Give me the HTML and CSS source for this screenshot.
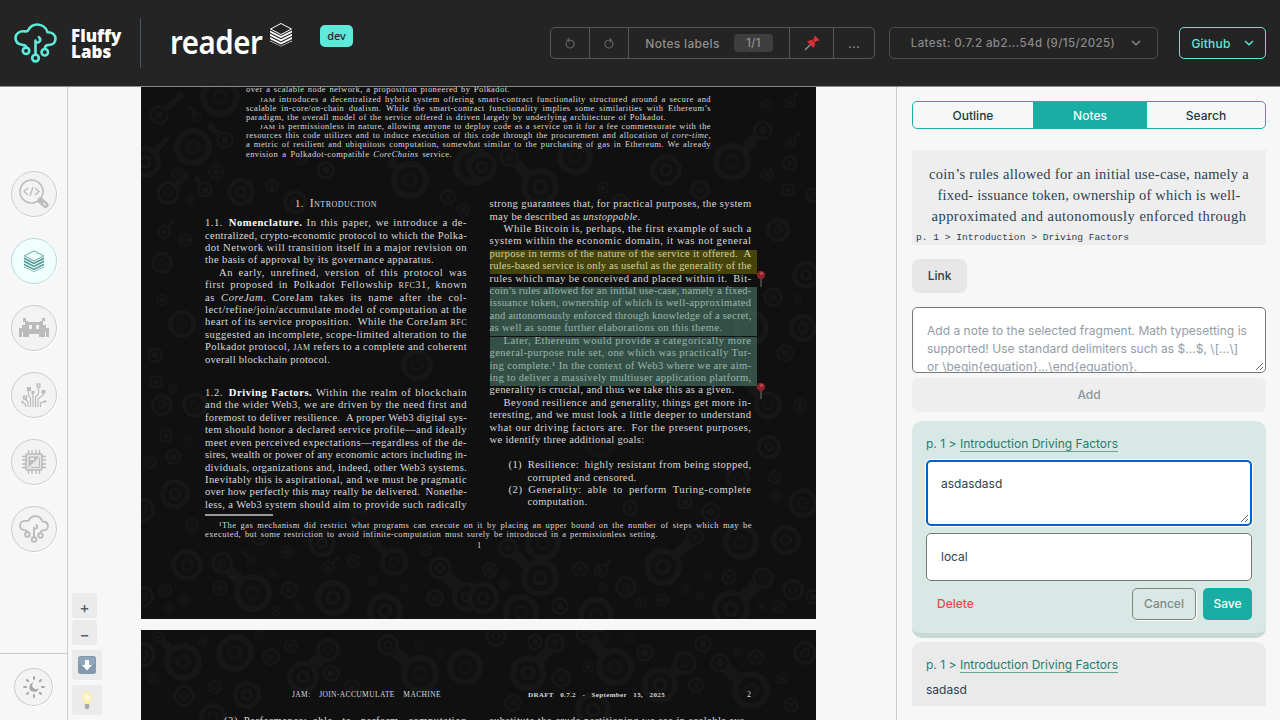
FILE: index.html
```html
<!DOCTYPE html>
<html lang="en">
<head>
<meta charset="utf-8">
<title>Fluffy Labs reader</title>
<link rel="stylesheet" href="styles.css">
</head>
<body>
<svg class="defs" width="0" height="0">
  <defs>
    <symbol id="cloud" viewBox="0 0 44 41">
      <g fill="none" stroke="currentColor" stroke-width="2.7" stroke-linecap="round" stroke-linejoin="round">
        <path d="M9 22.500C4 22 1.500 19.500 1.500 15.500C1.500 11 5.500 8.500 9.500 8.500C12 8.500 12.500 9 14 8C16 4 20 1.500 24 1.500C29 1.500 33 5 34.500 9.500C39 9.500 42.500 12 42.500 16.500C42.500 20 39.500 22.500 35.500 22.500C33 22.500 31.500 24 31.500 26.500"/>
        <path d="M9 22.500C11 22.500 12.300 23.500 12.300 25M22 32V18M25.500 14.500C28 17 27 20.500 22.500 20"/>
        <circle cx="12.300" cy="28.500" r="3.300"/><circle cx="22" cy="36" r="3.400"/><circle cx="31.500" cy="30" r="3.300"/>
      </g>
    </symbol>
    <symbol id="stack" viewBox="0 0 24 24">
      <path d="M12 1L22.500 6.500L12 12L1.500 6.500Z" fill="none" stroke="currentColor" stroke-width="1"/>
      <path d="M1 8L12 13.500L23 8V10L12 15.500L1 10ZM1 11.300L12 16.800L23 11.300V13.300L12 18.800L1 13.300ZM1 14.600L12 20.100L23 14.600V16.600L12 22.100L1 16.600ZM1 18L12 23.400L23 18V18.800L12 24L1 18.800Z" fill="currentColor"/>
    </symbol>
    <symbol id="chev" viewBox="0 0 10 6"><path d="M1 1L5 4.800L9 1" fill="none" stroke="currentColor" stroke-width="1.400"/></symbol>
    <symbol id="turn" viewBox="0 0 12 12"><path d="M3 4A4 4 0 1 0 7.500 2.800H3.500M5.500 .8L3.300 2.800L5.500 4.800" fill="none" stroke="currentColor" stroke-width="1.100"/></symbol>
    <symbol id="marker" viewBox="0 0 10 18"><path d="M5 8V17" stroke="#5a5250" stroke-width="1.500"/><circle cx="5" cy="5" r="4.200" fill="#8c2227"/><circle cx="5.500" cy="3.500" r="1.300" fill="#bb6262"/></symbol>
  </defs>
</svg>

<header class="top">
  <a class="brand"><svg class="cloud"><use href="#cloud"/></svg><span class="brand-name">Fluffy<br>Labs</span></a>
  <span class="divider"></span>
  <span class="product"><span class="wordmark">reader</span></span>
  <svg class="stack"><use href="#stack"/></svg>
  <span class="dev">dev</span>
  <div class="tools">
    <button class="tool arrow dim"><svg class="turn"><use href="#turn"/></svg></button>
    <button class="tool arrow dim"><svg class="turn flip"><use href="#turn"/></svg></button>
    <button class="tool labels">Notes labels <span class="count">1/1</span></button>
    <button class="tool pin">
      <svg width="16" height="16" viewBox="0 0 16 16"><path d="M6.500 9.500L1 15" stroke="#8b9aa3" stroke-width="1.300"/><path d="M3 6.500Q6 4.500 8.500 5L10.500 3Q9.500 1.500 11 .8L15.300 5Q14.800 6.300 13 5.700L11 7.800Q11.500 10.500 9.500 13Z" fill="#dd2e34"/><path d="M8.500 5L11 7.800" stroke="#9e1d25" stroke-width="1.200"/></svg>
    </button>
    <button class="tool dots">...</button>
  </div>
  <button class="version">Latest: 0.7.2 ab2...54d (9/15/2025)<svg class="chev"><use href="#chev"/></svg></button>
  <button class="github">Github<svg class="chev"><use href="#chev"/></svg></button>
</header>

<div class="app">
  <nav class="rail">
    <div class="apps">
      <a class="round"><svg width="30" height="30" viewBox="0 0 30 30"><g fill="none" stroke="currentColor"><circle cx="12.500" cy="12.500" r="11.500" stroke-width="1.500"/><path d="M9 9L5 12.500L9 16M16 9L20 12.500L16 16M14 8L11 17" stroke-width="1.300"/><path d="M21.500 21.500L26.500 26" stroke-width="6" stroke-linecap="round"/></g><path d="M24 24L27 26.500" stroke="#eee" stroke-width="1.200"/></svg></a>
      <a class="round active"><svg width="22" height="22"><use href="#stack"/></svg></a>
      <a class="round"><svg width="30" height="20" viewBox="0 0 30 20"><path fill="currentColor" fill-rule="evenodd" d="M4 0H7V3H9V4H21V3H23V0H26V3H24V7H27V10H30V19H27V14H26V19H20V16H10V19H4V14H3V19H0V10H3V7H6V4H4ZM10 7V11H13V7ZM17 7V11H20V7Z"/></svg></a>
      <a class="round"><svg width="26" height="26" viewBox="0 0 26 26"><g fill="none" stroke="currentColor" stroke-width="1.200"><path d="M12 25V10M14.500 25V15L17.500 12V5M17 25V17L22 13V10M9.500 25V16L7.500 13V8M7 25V20L4 17V15M19.500 25V21L24 19M4.500 25V22L1 20"/><rect x="16" y="2" width="3" height="3"/><rect x="2.500" y="14" width="3" height="3"/></g><g fill="currentColor"><rect x="6" y="5" width="4" height="4"/><rect x="10.500" y="9" width="3" height="3"/><rect x="20.500" y="8" width="4" height="3.500"/><circle cx="1.500" cy="20" r="1.200"/><circle cx="24" cy="19.500" r="1.200"/></g></svg></a>
      <a class="round"><svg width="26" height="26" viewBox="0 0 26 26"><path d="M7.500 1V25M11 1V25M15 1V25M18.500 1V25M1 7.500H25M1 11H25M1 15H25M1 18.500H25" stroke="currentColor" stroke-width="1.300"/><rect x="5" y="5" width="16" height="16" rx="1" fill="#e6e6e6" stroke="currentColor" stroke-width="1.600"/><path d="M7.500 7.500H18.500L7.500 18.500Z" fill="currentColor"/><path d="M9 9H13V11H9Z" fill="#eee"/><path d="M18.500 9V18.500H10" fill="none" stroke="currentColor"/></svg></a>
      <a class="round"><svg width="30" height="28"><use href="#cloud"/></svg></a>
    </div>
    <div class="theme">
      <a class="round small"><svg width="22" height="22" viewBox="0 0 22 22"><g fill="none" stroke="currentColor" stroke-width="2" stroke-linecap="round"><path d="M11 1V3M11 19V21M1 11H3M19 11H21M4 4L5.200 5.200M16.800 16.800L18 18M4 18L5.200 16.800M16.800 5.200L18 4"/></g><path d="M10.500 6.500A4.700 4.700 0 1 0 15.700 12A3.300 3.300 0 0 1 10.500 6.500Z" fill="currentColor"/></svg></a>
    </div>
  </nav>

  <main class="viewer">
    <div class="zoom">
      <button class="zbtn">+</button>
      <button class="zbtn">−</button>
      <button class="zbtn big first"><svg width="18" height="18" viewBox="0 0 18 18"><rect width="18" height="18" rx="2.500" fill="#8299b0"/><rect x="1" y="1" width="16" height="8" rx="2" fill="#90a6bb"/><path d="M7 4H11V9H14L9 14.500L4 9H7Z" fill="#fff"/></svg></button>
      <button class="zbtn big"><svg width="12" height="19" viewBox="0 0 12 19"><path d="M6 .5C9.300.5 11.300 2.800 11.300 5.700C11.300 8.500 9 9.500 8.500 13H3.500C3 9.500.7 8.500.7 5.700C.7 2.800 2.700.5 6 .5Z" fill="#fbeeb4"/><circle cx="6" cy="6" r="2.600" fill="#fffbe6"/><path d="M3.800 13H8.200V16.500L7 18.200H5L3.800 16.500Z" fill="#aaa"/></svg></button>
    </div>
    <article class="page one">
      <svg class="pattern" viewBox="141 87 675 532"></svg>
      <div class="abstract" data-block="abstract"></div>
      <div class="columns">
        <div class="col" data-block="left"></div>
        <div class="col right">
          <div data-block="right"></div>
          <i class="mark yellow"></i><i class="mark teal a"></i><i class="mark teal b"></i>
          <svg class="flag f1"><use href="#marker"/></svg><svg class="flag f2"><use href="#marker"/></svg>
        </div>
      </div>
      <hr class="rule">
      <div class="foot" data-block="foot"></div>
    </article>
    <article class="page two">
      <svg class="pattern" viewBox="141 630 675 90"></svg>
      <div class="running"><span class="r1" data-block="run1"></span><span class="r2" data-block="run2"></span><span class="r3">2</span></div>
      <div class="columns"><div class="col" data-block="next1"></div><div class="col right" data-block="next2"></div></div>
    </article>
  </main>

  <aside class="panel">
    <div class="tabs"><button class="tab">Outline</button><button class="tab on">Notes</button><button class="tab">Search</button></div>
    <div class="quote"><div class="quote-text" data-block="quote"></div><div class="crumbs">p. 1 &gt; Introduction &gt; Driving Factors</div></div>
    <button class="link">Link</button>
    <div class="area">Add a note to the selected fragment. Math typesetting is<br>supported! Use standard delimiters such as $...$, \[...\]<br>or \begin{equation}...\end{equation}.<svg class="grip" viewBox="0 0 9 9"><path d="M1 8L8 1M5 8L8 5" stroke="#555" stroke-width=".9"/></svg></div>
    <button class="add">Add</button>
    <section class="note editing">
      <div class="where">p. 1 &gt; <a>Introduction Driving Factors</a></div>
      <div class="field focus">asdasdasd<svg class="grip" viewBox="0 0 9 9"><path d="M1 8L8 1M5 8L8 5" stroke="#555" stroke-width=".9"/></svg></div>
      <div class="field">local</div>
      <div class="actions"><button class="delete">Delete</button><button class="cancel">Cancel</button><button class="save">Save</button></div>
    </section>
    <section class="note">
      <div class="where">p. 1 &gt; <a>Introduction Driving Factors</a></div>
      <div class="body">sadasd</div>
    </section>
  </aside>
</div>
<script src="app.js"></script>
</body>
</html>
```

FILE: styles.css
```css
* { box-sizing: border-box; }
body { margin: 0; width: 1280px; height: 720px; overflow: hidden; background: #f7f7f7; color: #2d3f50; font-family: Inter, "Noto Sans", sans-serif; font-size: 12px; display: flex; flex-direction: column; }
button { font: inherit; color: inherit; background: none; border: 0; padding: 0; margin: 0; display: flex; align-items: center; justify-content: center; }
.defs { position: absolute; }

/* header */
.top { height: 87px; flex: none; background: #242424; border-bottom: 1px solid #8b8b8b; display: flex; align-items: flex-start; color: #fff; }
.brand { display: flex; margin-left: 14px; padding-top: 23px; }
.cloud { width: 43px; height: 40px; color: #5eeadb; }
.brand-name { margin: 5px 0 0 14px; font: 900 17px/15.500px "Open Sans", sans-serif; width: 52px; letter-spacing: 0; }
.divider { width: 1px; height: 50px; background: #475569; margin: 18px 0 0 17px; }
.product { width: 98px; margin: 20px 0 0 29px; }
.wordmark { display: inline-block; font: 600 32px/44px "Noto Sans", sans-serif; letter-spacing: -.5px; transform: scaleX(.92); transform-origin: 0 0; }
.stack { width: 24px; height: 25px; margin: 22px 0 0 1px; }
.dev { width: 33px; height: 22px; margin: 25px 0 0 27px; border-radius: 5px; background: #5eeadb; color: #1c2b2b; font: 500 11px/21px "Noto Sans", sans-serif; text-align: center; }
.tools { display: flex; width: 325px; height: 32px; margin: 27px 0 0 197px; border: 1px solid #575757; border-radius: 5px; color: #8e8e8e; font-size: 13px; }
.tool { border-left: 1px solid #575757; }
.tool:first-child { border-left: 0; }
.arrow { width: 39px; color: #666; }
.arrow:first-child { width: 38px; }
.turn { width: 12px; height: 13px; }
.flip { transform: scaleX(-1); }
.labels { width: 161px; flex: none; font-size: 12px; letter-spacing: .3px; font-weight: 500; }
.count { margin-left: 14px; width: 39px; height: 18px; line-height: 18px; background: #3e3e3e; border-radius: 4px; letter-spacing: 0; }
.pin { width: 44px; flex: none; }
.dots { flex: 1; letter-spacing: .3px; }
.version { width: 269px; height: 32px; margin: 27px 0 0 14px; border: 1px solid #4d4d4d; border-radius: 5px; color: #8a8a8a; font-size: 11.500px; letter-spacing: .41px; font-weight: 500; padding-left: 5px; }
.chev { width: 10px; height: 6px; margin-left: 16px; }
.github { width: 87px; height: 32px; margin: 27px 0 0 21px; border: 1px solid #5eeadb; border-radius: 5px; color: #5eeadb; font-weight: 500; letter-spacing: .2px; }
.github .chev { margin-left: 13px; }

/* rail */
.app { flex: 1; display: flex; min-height: 0; }
.rail { width: 68px; border-right: 1px solid #ccc; display: flex; flex-direction: column; }
.apps { flex: 1; display: flex; flex-direction: column; align-items: center; gap: 21px; padding-top: 84px; }
.round { width: 46px; height: 46px; border: 1px solid #ccc; border-radius: 50%; background: #f3f3f3; color: #bbb; display: flex; align-items: center; justify-content: center; box-shadow: 1px 1px 0 #fff; }
.active { background: #effffd; border-color: #b4dcd8; color: #579a95; }
.theme { height: 67px; border-top: 1px solid #ccc; display: flex; justify-content: center; padding-top: 14px; }
.small { width: 39px; height: 38px; color: #a9a9a9; }

/* document */
.viewer { width: 828px; position: relative; padding-left: 73px; overflow: hidden; }
.zoom { position: absolute; left: 4px; top: 506px; display: flex; flex-direction: column; gap: 2px; }
.zbtn { width: 25px; height: 25px; background: #ebebeb; border-radius: 3px; font-size: 15px; font-weight: 500; color: #4f5f6d; padding-top: 4px; }
.big { width: 30px; height: 30px; padding: 0; margin-top: 3px; }
.page { width: 675px; background: #101010; color: #dadada; font-family: "Liberation Serif", serif; position: relative; overflow: hidden; }
.one { height: 532px; }
.two { height: 90px; margin-top: 11px; }
.pattern { position: absolute; inset: 0; width: 100%; height: 100%; }
.line { display: block; white-space: nowrap; text-align: justify; text-align-last: justify; position: relative; }
.line b { color: #fff; }
.sc { font-variant: small-caps; font-size: 1.120em; line-height: 0; }
.abstract { margin: 0 0 0 105px; width: 465px; height: 71.700px; font-size: 8.500px; line-height: 9.100px; }
.columns { display: grid; grid-template-columns: 262px 262px; column-gap: 22.500px; margin: 41px 0 0 64px; font-size: 10.600px; line-height: 12.420px; }
.col { position: relative; }
.one .columns { height: 315px; }
.mark { position: absolute; left: 0; width: 267px; }
.yellow { top: 52px; height: 24px; background: rgba(200,190,0,.3); }
.teal { background: rgba(88,144,124,.5); }
.teal.a { top: 89px; height: 49px; }
.teal.b { top: 139px; height: 49px; }
.flag { position: absolute; left: 266px; width: 10px; height: 18px; }
.f1 { top: 72px; }
.f2 { top: 184px; }
.rule { width: 68px; height: 2px; border: 0; background: #999; margin: 1px 0 0 64px; }
.foot { margin: 4.700px 0 0 64px; width: 547px; font-size: 8.500px; line-height: 9.300px; }
.running { position: relative; display: flex; padding: 59px 0 0 151px; font-size: 7.500px; line-height: 12px; }
.r1 { width: 149px; }
.r2 { width: 137px; margin-left: 87px; font-weight: bold; font-size: 7px; }
.r3 { margin-left: 82px; font-size: 8px; }
.two .columns { margin-top: 14px; }

/* notes panel */
.panel { width: 384px; border-left: 1px solid #ccc; padding: 14px 14px 0 15px; overflow: hidden; }
.tabs { display: grid; grid-template-columns: 120px 114px 1fr; height: 28px; border: 1px solid #18aea4; border-radius: 5px; overflow: hidden; font-weight: 500; letter-spacing: .2px; color: #173a39; }
.on { background: #18aea4; color: #e9fffc; }
.quote { height: 95px; margin-top: 21px; background: #eee; font-family: "Liberation Serif", serif; display: flex; flex-direction: column; align-items: center; padding-top: 14px; }
.quote-text { width: 320px; font-size: 14.500px; line-height: 21.100px; }
.crumbs { align-self: flex-start; margin: 5px 0 0 4px; font: 9.600px/12px "Liberation Mono", monospace; }
.link { margin-top: 14px; width: 55px; height: 34px; background: #e7e7e7; border-radius: 7px; font-weight: 500; padding-bottom: 1px; }
.area { position: relative; height: 66px; margin-top: 14px; border: 1px solid #777; border-radius: 5px; background: #fff; padding: 14px; line-height: 18px; letter-spacing: .02px; white-space: nowrap; color: #929da6; overflow: hidden; }
.grip { position: absolute; right: 1px; bottom: 1px; width: 9px; height: 9px; }
.add { width: 354px; height: 34px; margin-top: 5px; background: #eee; border-radius: 7px; color: #8b959d; font-weight: 500; padding-bottom: 2px; }
.note { margin-top: 4px; height: 64px; background: #eaeaea; border-radius: 10px 10px 0 0; padding: 15px 14px; }
.editing { margin-top: 9px; height: 217px; background: #d8e8e5; border-radius: 10px; border-bottom: 5px solid #c7d8d5; }
.where { color: #1b7e70; line-height: 16px; height: 24px; letter-spacing: .02px; }
.where a { border-bottom: 1px solid #6ba197; padding-bottom: 0; }
.field { position: relative; height: 48px; border: 1px solid #777; border-radius: 5px; background: #fff; padding: 14px; line-height: 18px; }
.focus { height: 66px; border: 2px solid #0060d0; box-shadow: 0 0 0 1px #fff; padding: 13px; margin-bottom: 7px; }
.actions { display: flex; height: 32px; margin-top: 7px; font-weight: 500; letter-spacing: .2px; }
.actions button { padding-bottom: 1px; }
.delete { color: #ee4848; margin: 0 auto 0 11px; }
.cancel { width: 64px; border: 1px solid #808080; border-radius: 5px; color: #7f8987; box-shadow: 1px 1px 0 #fff; }
.save { width: 49px; margin-left: 7px; border-radius: 5px; background: #18aea4; color: #fff; }
.body { line-height: 16px; margin-top: 1px; }
```

FILE: app.js
```js
// Each line: [markup, width, indent, extra space above]
const blocks = {
  abstract: [
    ['over a scalable node network, a proposition pioneered by Polkadot.', 264, 0, -1.6],
    ['<span class="sc">jam</span> introduces a decentralized hybrid system offering smart-contract functionality structured around a secure and', 451, 14],
    ['scalable in-core/on-chain dualism.&ensp;While the smart-contract functionality implies some similarities with Ethereum’s', 465],
    ['paradigm, the overall model of the service offered is driven largely by underlying architecture of Polkadot.', 420],
    ['<span class="sc">jam</span> is permissionless in nature, allowing anyone to deploy code as a service on it for a fee commensurate with the', 451, 14, 0.5],
    ['resources this code utilizes and to induce execution of this code through the procurement and allocation of <i>core-time</i>,', 465],
    ['a metric of resilient and ubiquitous computation, somewhat similar to the purchasing of gas in Ethereum. We already', 465],
    ['envision a Polkadot-compatible <i>CoreChains</i> service.', 206]
  ],
  left: [
    ['1.&ensp;<span class="sc">Introduction</span>', 82, 90],
    ['1.1.&ensp;<b>Nomenclature.</b> In this paper, we introduce a de-', 262, 0, 6.6],
    ['centralized, crypto-economic protocol to which the Polka-', 262],
    ['dot Network will transition itself in a major revision on', 262],
    ['the basis of approval by its governance apparatus.', 229],
    ['An early, unrefined, version of this protocol was', 248, 14],
    ['first proposed in Polkadot Fellowship <span class="sc">rfc</span>31, known', 262],
    ['as <i>CoreJam</i>.&ensp;CoreJam takes its name after the col-', 262],
    ['lect/refine/join/accumulate model of computation at the', 262],
    ['heart of its service proposition.&ensp;While the CoreJam <span class="sc">rfc</span>', 262],
    ['suggested an incomplete, scope-limited alteration to the', 262],
    ['Polkadot protocol, <span class="sc">jam</span> refers to a complete and coherent', 262],
    ['overall blockchain protocol.', 125],
    ['1.2.&ensp;<b>Driving Factors.</b> Within the realm of blockchain', 262, 0, 20.8],
    ['and the wider Web3, we are driven by the need first and', 262],
    ['foremost to deliver resilience.&ensp;A proper Web3 digital sys-', 262],
    ['tem should honor a declared service profile—and ideally', 262],
    ['meet even perceived expectations—regardless of the de-', 262],
    ['sires, wealth or power of any economic actors including in-', 262],
    ['dividuals, organizations and, indeed, other Web3 systems.', 262],
    ['Inevitably this is aspirational, and we must be pragmatic', 262],
    ['over how perfectly this may really be delivered.&ensp;Nonethe-', 262],
    ['less, a Web3 system should aim to provide such radically', 262]
  ],
  right: [
    ['strong guarantees that, for practical purposes, the system', 262],
    ['may be described as <i>unstoppable</i>.', 151],
    ['While Bitcoin is, perhaps, the first example of such a', 248, 14],
    ['system within the economic domain, it was not general', 262],
    ['purpose in terms of the nature of the service it offered.&ensp;A', 262],
    ['rules-based service is only as useful as the generality of the', 262],
    ['rules which may be conceived and placed within it.&ensp;Bit-', 262],
    ['coin’s rules allowed for an initial use-case, namely a fixed-', 262],
    ['issuance token, ownership of which is well-approximated', 262],
    ['and autonomously enforced through knowledge of a secret,', 262],
    ['as well as some further elaborations on this theme.', 233],
    ['Later, Ethereum would provide a categorically more', 248, 14],
    ['general-purpose rule set, one which was practically Tur-', 262],
    ['ing complete.¹ In the context of Web3 where we are aim-', 262],
    ['ing to deliver a massively multiuser application platform,', 262],
    ['generality is crucial, and thus we take this as a given.', 245],
    ['Beyond resilience and generality, things get more in-', 248, 14],
    ['teresting, and we must look a little deeper to understand', 262],
    ['what our driving factors are.&ensp;For the present purposes,', 262],
    ['we identify three additional goals:', 155],
    ['(1)&ensp;Resilience:&ensp;highly resistant from being stopped,', 243, 19, 12.6],
    ['corrupted and censored.', 109, 38],
    ['(2)&ensp;Generality:&ensp;able to perform Turing-complete', 243, 19],
    ['computation.', 60, 38]
  ],
  foot: [
    ['¹The gas mechanism did restrict what programs can execute on it by placing an upper bound on the number of steps which may be', 533, 14],
    ['executed, but some restriction to avoid infinite-computation must surely be introduced in a permissionless setting.', 453],
    ['1', 4, 272, 1.8]
  ],
  run1: [['JAM: JOIN-ACCUMULATE MACHINE', 149]],
  run2: [['DRAFT 0.7.2 - September 15, 2025', 137]],
  next1: [['(3)&ensp;Performance:&ensp;able to perform computation', 243, 19]],
  next2: [['substitute the crude partitioning we see in scalable sys-', 259]],
  quote: [
    ['coin’s rules allowed for an initial use-case, namely a', 320],
    ['fixed- issuance token, ownership of which is well-', 303, 8.5],
    ['approximated and autonomously enforced through', 315, 2.5]
  ]
};

// Track each line out to its measure; the rest is left to justification.
for (const host of document.querySelectorAll('[data-block]')) {
  for (const [markup, width, indent = 0, above = 0] of blocks[host.dataset.block]) {
    const line = document.createElement('span');
    line.className = 'line';
    line.innerHTML = markup;
    line.style.width = 'max-content';
    host.append(line);
    const slack = width - line.getBoundingClientRect().width;
    const size = parseFloat(getComputedStyle(host).fontSize);
    const track = Math.min(slack / line.textContent.length, size * 0.05);
    line.style.letterSpacing = track.toFixed(3) + 'px';
    line.style.width = width + 'px';
    line.style.marginLeft = indent + 'px';
    line.style.marginTop = above + 'px';
  }
}

// Background texture: x, y, radius triples; links join two blobs.
const blobs = [
220,97,20,159,115,10,193,147,19,145,162,16,178,174,7,216,172,8,197,117,5,225,140,9,168,193,12,205,190,8,191,201,5,241,192,14,272,185,7,326,170,9,301,158,7,295,202,12,162,263,11,164,232,7,185,240,7,162,300,6,182,324,14,155,355,8,410,180,19,473,166,20,448,197,8,463,210,7,417,365,16,
482,167,15,509,157,10,540,187,19,575,157,18,666,170,16,732,162,19,763,130,10,700,190,10,603,188,6,620,202,9,790,102,6,766,105,6,790,143,6,790,163,8,767,174,7,788,190,7,778,230,12,813,195,8,806,275,14,773,297,10,803,328,14,751,328,18,785,353,9,798,298,4,
156,382,7,173,388,5,162,405,11,195,405,13,166,436,7,188,442,5,173,457,8,150,462,7,175,494,15,192,525,7,143,510,12,187,565,16,222,563,11,253,593,19,220,588,8,165,590,7,169,608,5,184,600,5,143,597,11,289,590,9,273,574,5,276,611,5,298,607,5,251,561,5,287,552,7,328,568,7,333,598,18,354,561,7,373,581,5,394,562,14,385,611,18,435,598,9,440,568,12,426,550,6,467,597,15,404,588,5,322,543,14,260,537,9,
540,578,19,508,548,10,490,570,8,505,584,6,663,567,19,695,537,9,601,571,7,580,569,8,626,587,11,603,588,5,560,606,9,596,615,18,483,598,16,521,612,18,641,603,6,662,600,7,686,589,5,700,596,5,731,609,19,763,578,11,708,577,5,729,577,8,761,607,4,779,607,7,793,590,11,741,542,18,786,540,15,803,503,15,776,497,6,775,477,7,769,447,12,768,405,14,800,405,7,738,478,12,685,502,8,630,508,8,711,512,10,543,543,18,813,597,8,
183,662,19,158,637,6,235,653,19,203,642,5,271,657,9,291,646,7,259,635,5,303,677,16,328,650,12,331,673,9,420,674,19,388,645,11,465,667,18,184,696,11,215,687,7,247,695,14,153,678,6,143,655,13,419,646,5,441,653,5,213,717,14,352,687,8,
496,636,11,535,642,8,555,643,10,528,673,18,561,678,10,588,667,6,615,667,19,586,633,11,606,638,5,645,653,9,630,637,5,703,644,9,685,663,12,660,685,18,696,685,8,720,663,10,751,690,19,738,652,5,756,657,8,782,678,6,791,705,8,805,653,12,513,703,9,593,710,18];
const faint = [260,240,14,330,260,18,400,250,12,290,320,16,370,330,13,440,300,18,240,420,18,320,440,14,400,430,18,450,480,15,275,480,12,360,500,16,550,250,15,640,260,18,710,240,12,590,330,16,680,360,18,530,400,14,600,440,18,680,430,12];
const links = [166,140,4,145,162,12, 205,190,5,197,179,3, 768,405,10,740,375,7, 763,130,7,732,162,13, 222,563,8,253,593,12, 508,548,7,540,578,13, 695,537,7,663,567,13, 763,578,8,731,609,13, 440,568,8,467,597,12, 354,520,5,394,562,10, 303,677,11,328,650,9, 388,645,8,420,674,13, 158,637,5,183,662,12, 685,663,9,660,685,13, 720,663,8,751,690,13, 586,633,8,615,667,13, 555,643,7,528,673,12, 159,115,5,180,96,4, 225,140,6,211,127,4, 410,180,13,392,163,5, 540,187,13,509,157,7, 168,193,9,185,177,4, 197,117,4,190,108,2, 164,232,4,172,222,2, 790,102,4,797,94,2, 790,143,4,798,134,2, 251,561,3,243,552,2, 601,571,5,609,562,2, 328,568,5,337,559,2];
let art = '';
for (let i = 0; i < links.length; i += 6) {
  const [x1, y1, r1, x2, y2, r2] = links.slice(i, i + 6);
  art += `<path d="M${x1} ${y1}L${x2} ${y2}" stroke="#171717" stroke-width="${Math.min(r1, r2) * 1.5}" stroke-linecap="round"/><circle cx="${x2}" cy="${y2}" r="${r2}" fill="#171717"/>`;
}
function rings(list, tone) {
  for (let i = 0; i < list.length; i += 3) {
    const [x, y, r] = list.slice(i, i + 3);
    const at = `cx="${x}" cy="${y}"`;
    art += `<circle ${at} r="${r}" fill="${tone}"/><circle ${at} r="${r * .68}" fill="#111"/><circle ${at} r="${r * .42}" fill="${i % 2 ? tone : '#151515'}"/>`;
    if (r > 10) art += `<circle ${at} r="${r * .22}" fill="#111"/>`;
  }
}
rings(faint, '#141414');
rings(blobs, '#171717');
for (const svg of document.querySelectorAll('.pattern')) svg.innerHTML = art;
```
